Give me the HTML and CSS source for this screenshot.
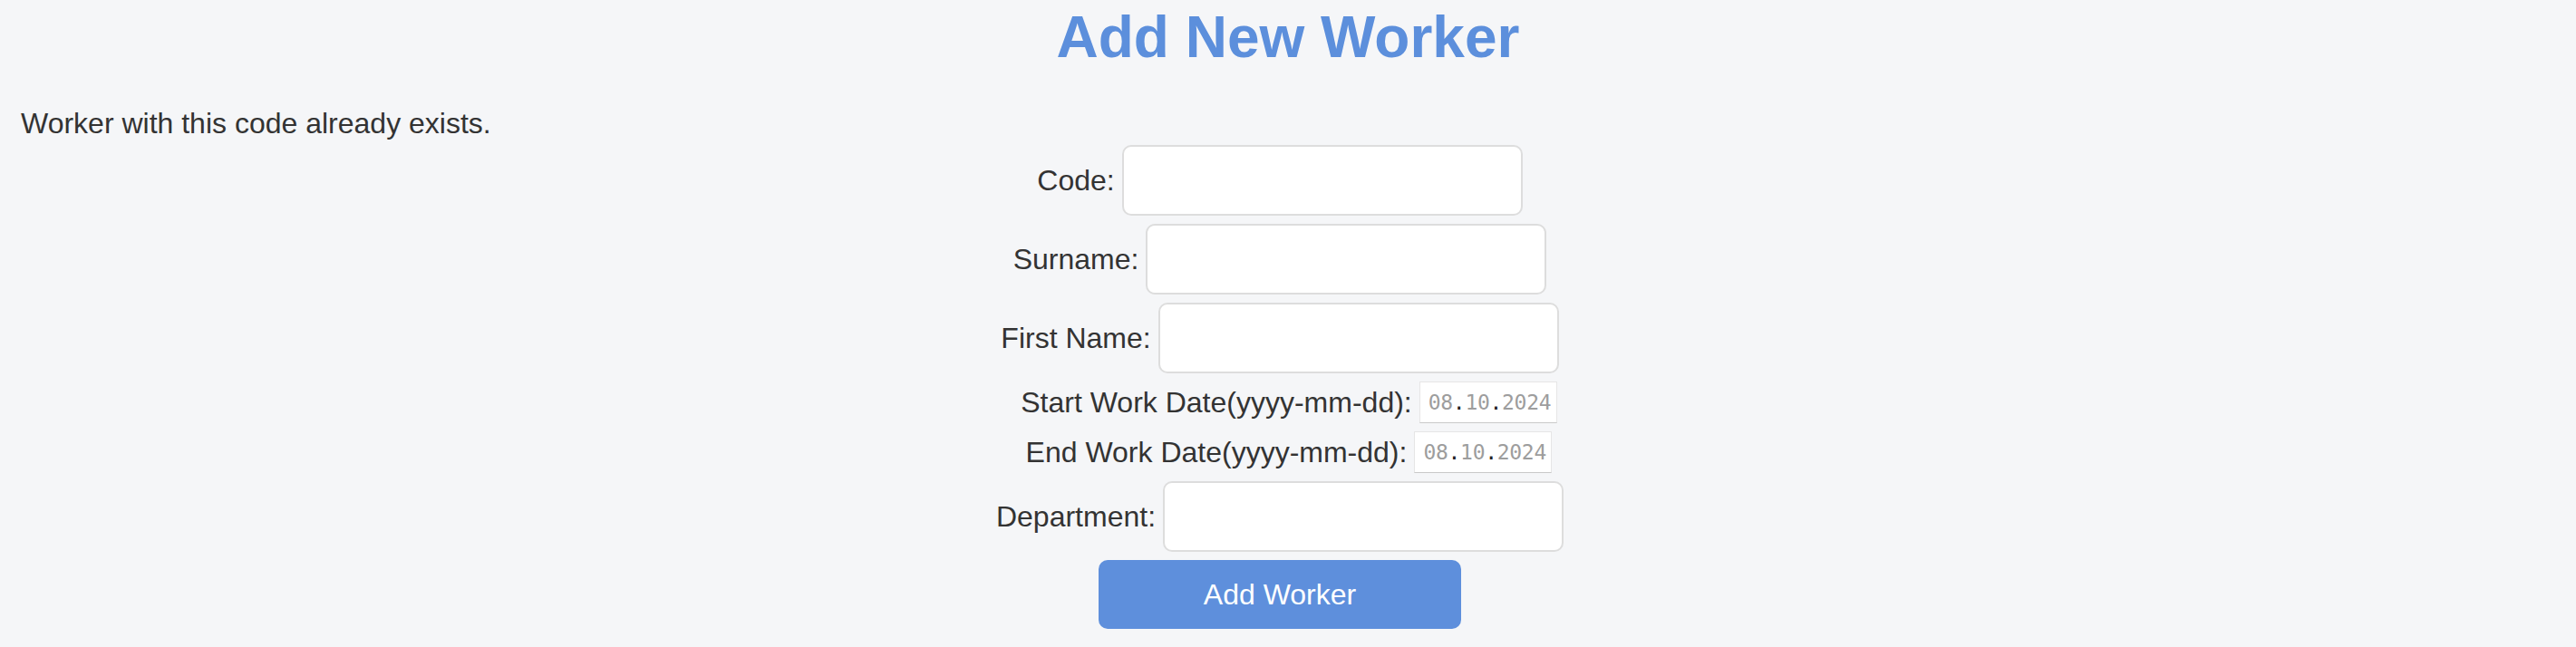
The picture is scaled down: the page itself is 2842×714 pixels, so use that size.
FILE: index.html
```html
<!DOCTYPE html>
<html lang="en">
<head>
<meta charset="utf-8">
<title>Add New Worker</title>
<link rel="stylesheet" href="styles.css">
</head>
<body>
  <h1 class="title">Add New Worker</h1>
  <p class="message">Worker with this code already exists.</p>
  <form class="worker-form">
    <div class="row">
      <label class="label">Code:</label>
      <input class="text-input" type="text">
    </div>
    <div class="row">
      <label class="label">Surname:</label>
      <input class="text-input" type="text">
    </div>
    <div class="row">
      <label class="label">First Name:</label>
      <input class="text-input" type="text">
    </div>
    <div class="row row-date">
      <label class="label">Start Work Date(yyyy-mm-dd):</label>
      <div class="date-input"><span class="d">08</span><span class="sep">.</span><span class="d">10</span><span class="sep">.</span><span class="d">2024</span></div>
    </div>
    <div class="row row-date">
      <label class="label">End Work Date(yyyy-mm-dd):</label>
      <div class="date-input"><span class="d">08</span><span class="sep">.</span><span class="d">10</span><span class="sep">.</span><span class="d">2024</span></div>
    </div>
    <div class="row">
      <label class="label">Department:</label>
      <input class="text-input" type="text">
    </div>
    <div class="row">
      <button class="submit" type="button">Add Worker</button>
    </div>
  </form>
</body>
</html>
```
FILE: styles.css
```css
html, body {
  margin: 0;
  padding: 0;
}
body {
  background: #f5f6f8;
  font-family: "Liberation Sans", Arial, sans-serif;
  color: #333333;
  padding-top: 4px;
}
.title {
  margin: 0;
  font-size: 64px;
  line-height: 74px;
  font-weight: bold;
  color: #5c8fdc;
  text-align: center;
}
.message {
  margin: 40px 0 0 23px;
  font-size: 32px;
  line-height: 37px;
}
.worker-form {
  margin-top: 5px;
  display: flex;
  flex-direction: column;
  gap: 9px;
  padding-right: 18px;
}
.row {
  display: flex;
  justify-content: center;
  align-items: center;
  gap: 8px;
}
.row-date {
  padding-left: 20px;
}
.label {
  font-size: 32px;
  line-height: 37px;
  color: #333333;
}
.text-input {
  box-sizing: border-box;
  width: 442px;
  height: 78px;
  border: 2px solid #dddddd;
  border-radius: 10px;
  background: #ffffff;
  margin: 0;
  padding: 0 20px;
  font-size: 32px;
  font-family: "Liberation Sans", Arial, sans-serif;
  outline: none;
}
.date-input {
  box-sizing: border-box;
  width: 152px;
  height: 46px;
  background: #ffffff;
  border: 1px solid #e6e6e6;
  border-bottom-color: #c9c9c9;
  padding: 0 7px 0 9px;
  display: flex;
  align-items: center;
  font-family: "DejaVu Sans Mono", monospace;
  font-size: 23px;
  letter-spacing: -0.3px;
}
.date-input .d {
  color: #9d9d9d;
}
.date-input .sep {
  color: #222222;
}
.submit {
  box-sizing: border-box;
  width: 400px;
  height: 76px;
  margin: 0;
  border: none;
  border-radius: 10px;
  background: #5e8fdc;
  color: #ffffff;
  font-family: "Liberation Sans", Arial, sans-serif;
  font-size: 32px;
  cursor: pointer;
}
```
